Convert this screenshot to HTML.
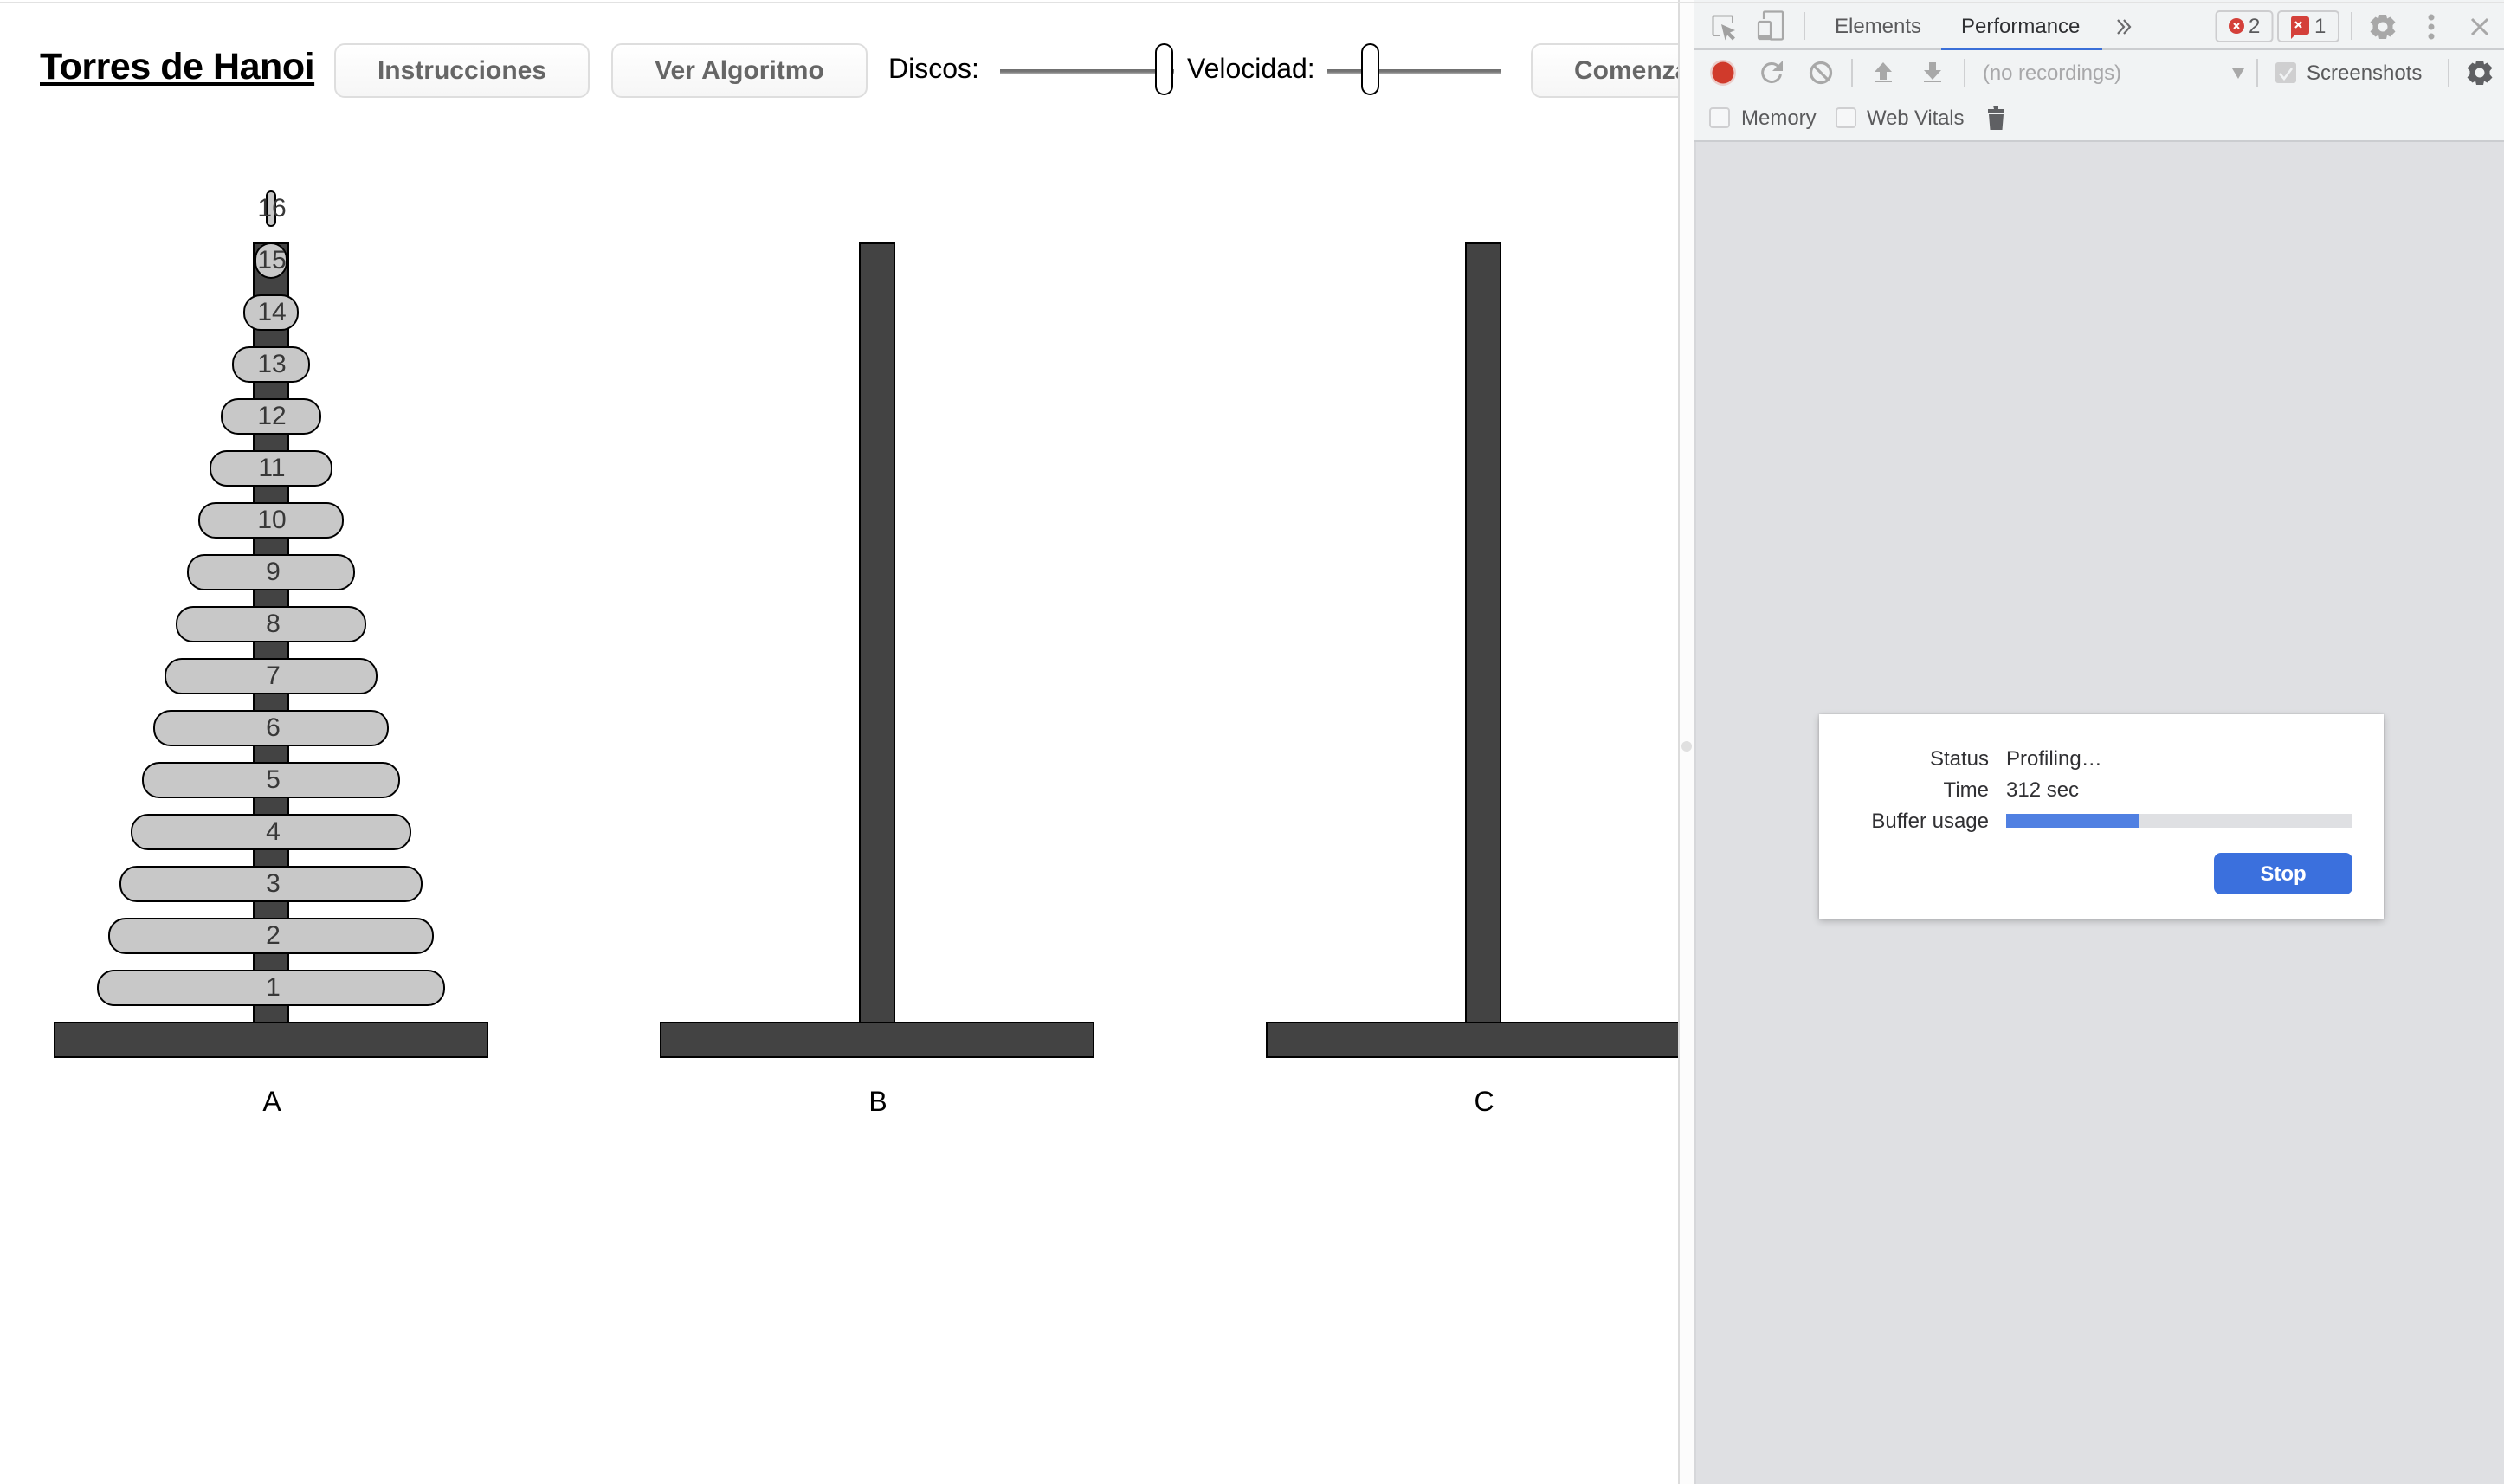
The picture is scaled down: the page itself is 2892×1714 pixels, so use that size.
<!DOCTYPE html>
<html lang="es">
<head>
<meta charset="utf-8">
<title>Torres de Hanoi</title>
<style>
html,body{margin:0;padding:0;background:#fff;width:2892px;height:1714px;overflow:hidden}
body{position:relative;font-family:"Liberation Sans",Arial,sans-serif}
.a{position:absolute;white-space:nowrap}
#page{position:absolute;left:0;top:0;width:1938px;height:1714px;overflow:hidden}
.btn{position:absolute;top:50px;height:63px;box-sizing:border-box;border:2.5px solid #dedede;border-radius:12px;background:linear-gradient(#fff,#f6f6f6);color:#666;font-weight:bold;font-size:30px;line-height:60px;text-align:center;white-space:nowrap;overflow:hidden}
.lab{position:absolute;font-size:32px;line-height:36px;color:#000;white-space:nowrap}
.track{position:absolute;top:80px;height:5px;background:linear-gradient(#6f6f6f 0,#777 60%,#aaa 100%)}
.thumb{position:absolute;top:50px;width:21px;height:60px;box-sizing:border-box;border:2.5px solid #000;border-radius:11px;background:#fff}
.pole{position:absolute;top:280px;width:42px;height:902px;box-sizing:border-box;border:2px solid #000;background:#434343}
.base{position:absolute;top:1180px;width:502px;height:42px;box-sizing:border-box;border:2.5px solid #000;background:#434343}
.d{position:absolute;height:42px;box-sizing:border-box;border:2.3px solid #000;border-radius:20px;background:#c8c8c8;display:flex;align-items:center;justify-content:center;font-size:30px;color:#383838}
.d span{position:relative;left:2.5px;white-space:nowrap}
.d span.w{left:1px}
.pn{position:absolute;top:1254px;width:60px;text-align:center;font-size:32px;line-height:36px;color:#000}
#dt{position:absolute;left:1957px;top:0;width:935px;height:1714px;background:#dfe0e3;overflow:hidden}
.t{position:absolute;font-size:24px;line-height:28px;white-space:nowrap;color:#5a5a5c}
.sep{position:absolute;width:2px;background:#cfd0d2}
svg{position:absolute;overflow:visible}
</style>
</head>
<body>
<div id="page">
  <div class="a" style="left:46px;top:52px;font-size:43px;line-height:50px;font-weight:bold;color:#000;text-decoration:underline;text-decoration-thickness:4px;text-underline-offset:4px;letter-spacing:-.47px">Torres de Hanoi</div>
  <div class="btn" style="left:386px;width:295px">Instrucciones</div>
  <div class="btn" style="left:706px;width:296px">Ver Algoritmo</div>
  <div class="lab" style="left:1026px;top:61px">Discos:</div>
  <div class="track" style="left:1155px;width:201px"></div>
  <div class="thumb" style="left:1334px"></div>
  <div class="lab" style="left:1371px;top:61px">Velocidad:</div>
  <div class="track" style="left:1533px;width:201px"></div>
  <div class="thumb" style="left:1572px"></div>
  <div class="btn" style="left:1768px;width:295px;text-align:left;padding-left:48px">Comenzar</div>

  <div class="pole" style="left:292px"></div>
  <div class="pole" style="left:992px"></div>
  <div class="pole" style="left:1692px"></div>
  <div class="base" style="left:62px"></div>
  <div class="base" style="left:762px"></div>
  <div class="base" style="left:1462px"></div>

  <div class="d" style="left:112px;top:1120px;width:402px"><span>1</span></div>
  <div class="d" style="left:125px;top:1060px;width:376px"><span>2</span></div>
  <div class="d" style="left:138px;top:1000px;width:350px"><span>3</span></div>
  <div class="d" style="left:151px;top:940px;width:324px"><span>4</span></div>
  <div class="d" style="left:164px;top:880px;width:298px"><span>5</span></div>
  <div class="d" style="left:177px;top:820px;width:272px"><span>6</span></div>
  <div class="d" style="left:190px;top:760px;width:246px"><span>7</span></div>
  <div class="d" style="left:203px;top:700px;width:220px"><span>8</span></div>
  <div class="d" style="left:216px;top:640px;width:194px"><span>9</span></div>
  <div class="d" style="left:229px;top:580px;width:168px"><span class="w">10</span></div>
  <div class="d" style="left:242px;top:520px;width:142px"><span class="w">11</span></div>
  <div class="d" style="left:255px;top:460px;width:116px"><span class="w">12</span></div>
  <div class="d" style="left:268px;top:400px;width:90px"><span class="w">13</span></div>
  <div class="d" style="left:281px;top:340px;width:64px"><span class="w">14</span></div>
  <div class="d" style="left:294px;top:280px;width:38px"><span class="w">15</span></div>
  <div class="d" style="left:307px;top:220px;width:12px"><span class="w">16</span></div>

  <div class="pn" style="left:284px">A</div>
  <div class="pn" style="left:984px">B</div>
  <div class="pn" style="left:1684px">C</div>
</div>

<!-- top line -->
<div class="a" style="left:0;top:2px;width:2892px;height:2px;background:#e2e2e2;z-index:5"></div>

<!-- splitter -->
<div class="a" style="left:1938px;top:0;width:2px;height:1714px;background:#dcdcdc"></div>
<div class="a" style="left:1940px;top:0;width:17px;height:1714px;background:#fcfcfc"></div>
<div class="a" style="left:1942px;top:856px;width:12px;height:12px;border-radius:50%;background:#e0e0e0"></div>

<!-- devtools -->
<div id="dt">
  <div class="a" style="left:0;top:0;width:935px;height:162px;background:#f1f3f4"></div>
  <div class="a" style="left:0;top:56px;width:935px;height:2px;background:#cbcdd0"></div>
  <div class="a" style="left:0;top:162px;width:935px;height:2px;background:#cbcdd0"></div>
  <div class="a" style="left:0;top:164px;width:2px;height:1550px;background:#d6d7da"></div>
</div>

<!-- row 1 icons -->
<svg style="left:0;top:0" width="2892" height="170" viewBox="0 0 2892 170">
  <!-- inspect -->
  <path d="M1987 41h-7q-1.500 0-1.500-1.500V20q0-1.500 1.500-1.500h19.500q1.500 0 1.500 1.500v6" fill="none" stroke="#a8a8a8" stroke-width="2"/>
  <path d="M1988 28l16 7-6 2.500 6 6-3 3-6-6-2.500 6z" fill="#a0a0a0"/>
  <!-- device -->
  <path d="M2037 22v-7q0-1.500 1.500-1.500h19q1.500 0 1.500 1.500v29q0 1.500-1.500 1.500h-13" fill="none" stroke="#a8a8a8" stroke-width="2.200"/>
  <rect x="2031" y="25" width="14" height="20" rx="1.500" fill="none" stroke="#a8a8a8" stroke-width="2.200"/>
  <rect x="2031" y="41" width="14" height="4" fill="#a8a8a8"/>
  <!-- more chevrons -->
  <path d="M2446 23l7 8-7 8M2453 23l7 8-7 8" fill="none" stroke="#6a6a6c" stroke-width="2.200"/>
  <!-- badge 1 -->
  <rect x="2559.500" y="13" width="65" height="35" rx="4" fill="none" stroke="#cdcdcf" stroke-width="2"/>
  <circle cx="2583" cy="30" r="9" fill="#d4403a"/>
  <path d="M2580 27l6 6M2586 27l-6 6" stroke="#fff" stroke-width="2"/>
  <!-- badge 2 -->
  <rect x="2631" y="13" width="70" height="35" rx="4" fill="none" stroke="#cdcdcf" stroke-width="2"/>
  <path d="M2648 19h16q3 0 3 3v15q0 3-3 3h-13l-5 5v-23q0-3 2-3z" fill="#d4403a"/>
  <path d="M2651 25l7 7M2658 25l-7 7" stroke="#fff" stroke-width="2.200"/>
  <!-- top gear -->
  <g fill="#a8a8a8" transform="translate(2752 31)">
    <path fill-rule="evenodd" d="M-4-14H4L5-9.500 8.500-11.500 14.500-5.500 11.500-2 11.500 2 14.500 5.500 8.500 11.500 5 9.500 4 14H-4L-5 9.500-8.500 11.500-14.500 5.500-11.500 2-11.500-2-14.500-5.500-8.500-11.500-5-9.500ZM0-5.500A5.500 5.500 0 1 0 0 5.500 5.500 5.500 0 1 0 0-5.500Z"/>
  </g>
  <!-- dots -->
  <circle cx="2808" cy="20" r="3.500" fill="#a8a8a8"/>
  <circle cx="2808" cy="31" r="3.500" fill="#a8a8a8"/>
  <circle cx="2808" cy="42" r="3.500" fill="#a8a8a8"/>
  <!-- close -->
  <path d="M2855 22l18 18M2873 22l-18 18" stroke="#a8a8a8" stroke-width="3"/>

  <!-- record -->
  <circle cx="1990" cy="84" r="15" fill="#e7a8a0" opacity=".5"/>
  <circle cx="1990" cy="84" r="12.500" fill="#d03a2b"/>
  <!-- reload -->
  <path d="M2054 77a10.500 10.500 0 1 0 2.500 9" fill="none" stroke="#a8a8a8" stroke-width="3"/>
  <path d="M2059 70v12h-12z" fill="#a8a8a8"/>
  <!-- ban -->
  <circle cx="2103" cy="84" r="11.500" fill="none" stroke="#a8a8a8" stroke-width="3.200"/>
  <path d="M2095 76l16 16" stroke="#a8a8a8" stroke-width="3.200"/>
  <!-- up -->
  <path d="M2175 72l10 11h-6v9h-8v-9h-6z" fill="#a8a8a8"/>
  <rect x="2165" y="93" width="20" height="2" fill="#a8a8a8"/>
  <!-- down -->
  <path d="M2228 72h8v9h6l-10 11-10-11h6z" fill="#a8a8a8"/>
  <rect x="2222" y="93" width="20" height="2" fill="#a8a8a8"/>
  <!-- dropdown -->
  <path d="M2578 79h14l-7 12z" fill="#a8a8a8"/>
  <!-- checkbox screenshots -->
  <rect x="2628" y="72" width="24" height="24" rx="3" fill="#cfcfd0"/>
  <path d="M2633 85l5 6 9-12" fill="none" stroke="#f1f3f4" stroke-width="2.600"/>
  <!-- row 2 gear -->
  <g fill="#5f6063" transform="translate(2864 84)">
    <path fill-rule="evenodd" d="M-4-14H4L5-9.500 8.500-11.500 14.500-5.500 11.500-2 11.500 2 14.500 5.500 8.500 11.500 5 9.500 4 14H-4L-5 9.500-8.500 11.500-14.500 5.500-11.500 2-11.500-2-14.500-5.500-8.500-11.500-5-9.500ZM0-5.500A5.500 5.500 0 1 0 0 5.500 5.500 5.500 0 1 0 0-5.500Z"/>
  </g>
  <!-- row 3 checkboxes -->
  <rect x="1975" y="125" width="22" height="22" rx="3" fill="#f6f7f8" stroke="#cfcfd1" stroke-width="2"/>
  <rect x="2121" y="125" width="22" height="22" rx="3" fill="#f6f7f8" stroke="#cfcfd1" stroke-width="2"/>
  <!-- trash -->
  <path d="M2302 122h6v4h7v4h-19v-4h7z" fill="#5f6063"/>
  <path d="M2297 132h17l-1.500 18h-14z" fill="#5f6063"/>
</svg>

<div class="sep" style="left:2083px;top:14px;height:32px"></div>
<div class="sep" style="left:2715px;top:14px;height:32px"></div>
<div class="sep" style="left:2138px;top:68px;height:32px"></div>
<div class="sep" style="left:2268px;top:68px;height:32px"></div>
<div class="sep" style="left:2606px;top:68px;height:32px"></div>
<div class="sep" style="left:2827px;top:68px;height:32px"></div>

<div class="t" style="left:2119px;top:17px">Elements</div>
<div class="t" style="left:2265px;top:17px;color:#2f3033">Performance</div>
<div class="a" style="left:2242px;top:55px;width:186px;height:3px;background:#3a6fd8"></div>
<div class="t" style="left:2597px;top:17px">2</div>
<div class="t" style="left:2673px;top:17px">1</div>
<div class="t" style="left:2290px;top:71px;color:#a8a8aa;letter-spacing:-.1px">(no recordings)</div>
<div class="t" style="left:2664px;top:71px">Screenshots</div>
<div class="t" style="left:2011px;top:123px">Memory</div>
<div class="t" style="left:2156px;top:123px;letter-spacing:-.15px">Web Vitals</div>

<!-- dialog -->
<div class="a" style="left:2101px;top:825px;width:652px;height:236px;background:#fff;box-shadow:0 3px 8px rgba(0,0,0,.22),0 0 3px rgba(0,0,0,.15)"></div>
<div class="t" style="right:595px;top:862.500px;color:#303033">Status</div>
<div class="t" style="left:2317px;top:862.500px;color:#303033">Profiling…</div>
<div class="t" style="right:595px;top:898.500px;color:#303033">Time</div>
<div class="t" style="left:2317px;top:898.500px;color:#303033">312 sec</div>
<div class="t" style="right:595px;top:935px;color:#303033">Buffer usage</div>
<div class="a" style="left:2317px;top:940px;width:400px;height:16px;background:#dfe0e3"></div>
<div class="a" style="left:2317px;top:940px;width:154px;height:16px;background:#5080e2"></div>
<div class="a" style="left:2557px;top:985px;width:160px;height:48px;border-radius:8px;background:#3b70dd;color:#fff;font-size:24px;font-weight:bold;line-height:50px;text-align:center">Stop</div>
</body>
</html>
